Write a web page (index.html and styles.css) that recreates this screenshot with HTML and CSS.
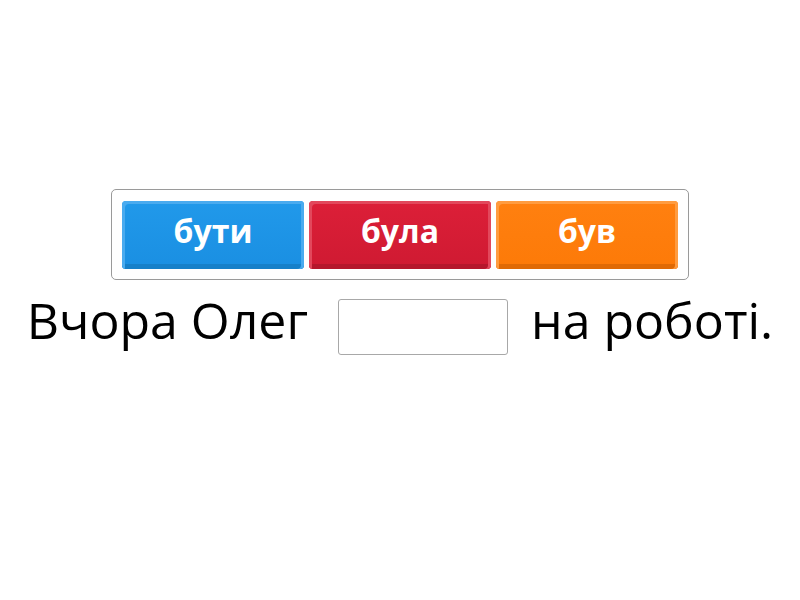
FILE: index.html
```html
<!DOCTYPE html>
<html lang="uk">

<head>
  <meta charset="UTF-8" />
  <title>Вправа</title>

  <link rel="stylesheet" href="styles.css">
</head>

<body>
  <div class="stage">
    <div class="choices">
      <button class="choice blue">бути</button>
      <button class="choice red">була</button>
      <button class="choice orange">був</button>
    </div>

    <p class="sentence">
      <span>Вчора Олег</span>
      <span class="blank"></span>
      <span>на роботі.</span>
    </p>
  </div>
</body>

</html>
```

FILE: styles.css
```css
body {
  margin: 0;
  background: #fff;
  font-family: "Open Sans", "Noto Sans", sans-serif;
}

.stage {
  width: 800px;
  height: 600px;
  display: flex;
  flex-direction: column;
  align-items: center;
  padding-top: 189px;
  box-sizing: border-box;
}

.choices {
  display: flex;
  gap: 5px;
  padding: 11px 10px 10px 10px;
  border: 1px solid #9a9a9a;
  border-radius: 5px;
}

.choice {
  width: 182px;
  height: 68px;
  border: none;
  border-radius: 4px;
  color: #fff;
  font-family: inherit;
  font-weight: 700;
  font-size: 32px;
  padding: 0 0 10px 0;
  cursor: pointer;
}

.blue {
  background: linear-gradient(#2199ea, #1a8fe2);
  box-shadow: inset 3px 3px 0 #4aabef, inset -3px 0 0 #4aabef, inset 0 -5px 0 #1680c9;
}

.red {
  background: linear-gradient(#dc1f38, #cf1a32);
  box-shadow: inset 3px 3px 0 #e2485c, inset -3px 0 0 #e2485c, inset 0 -5px 0 #b5172c;
}

.orange {
  background: linear-gradient(#ff8010, #fd7a08);
  box-shadow: inset 3px 3px 0 #ff9c40, inset -3px 0 0 #ff9c40, inset 0 -5px 0 #e06a05;
}

.sentence {
  margin: 6px 0 0 0;
  display: flex;
  align-items: flex-start;
  font-size: 50px;
  color: #000;
}

.blank {
  width: 168px;
  height: 54px;
  border: 1px solid #a8a8a8;
  border-radius: 3px;
  margin: 13px 23px 0 30px;
}
```
